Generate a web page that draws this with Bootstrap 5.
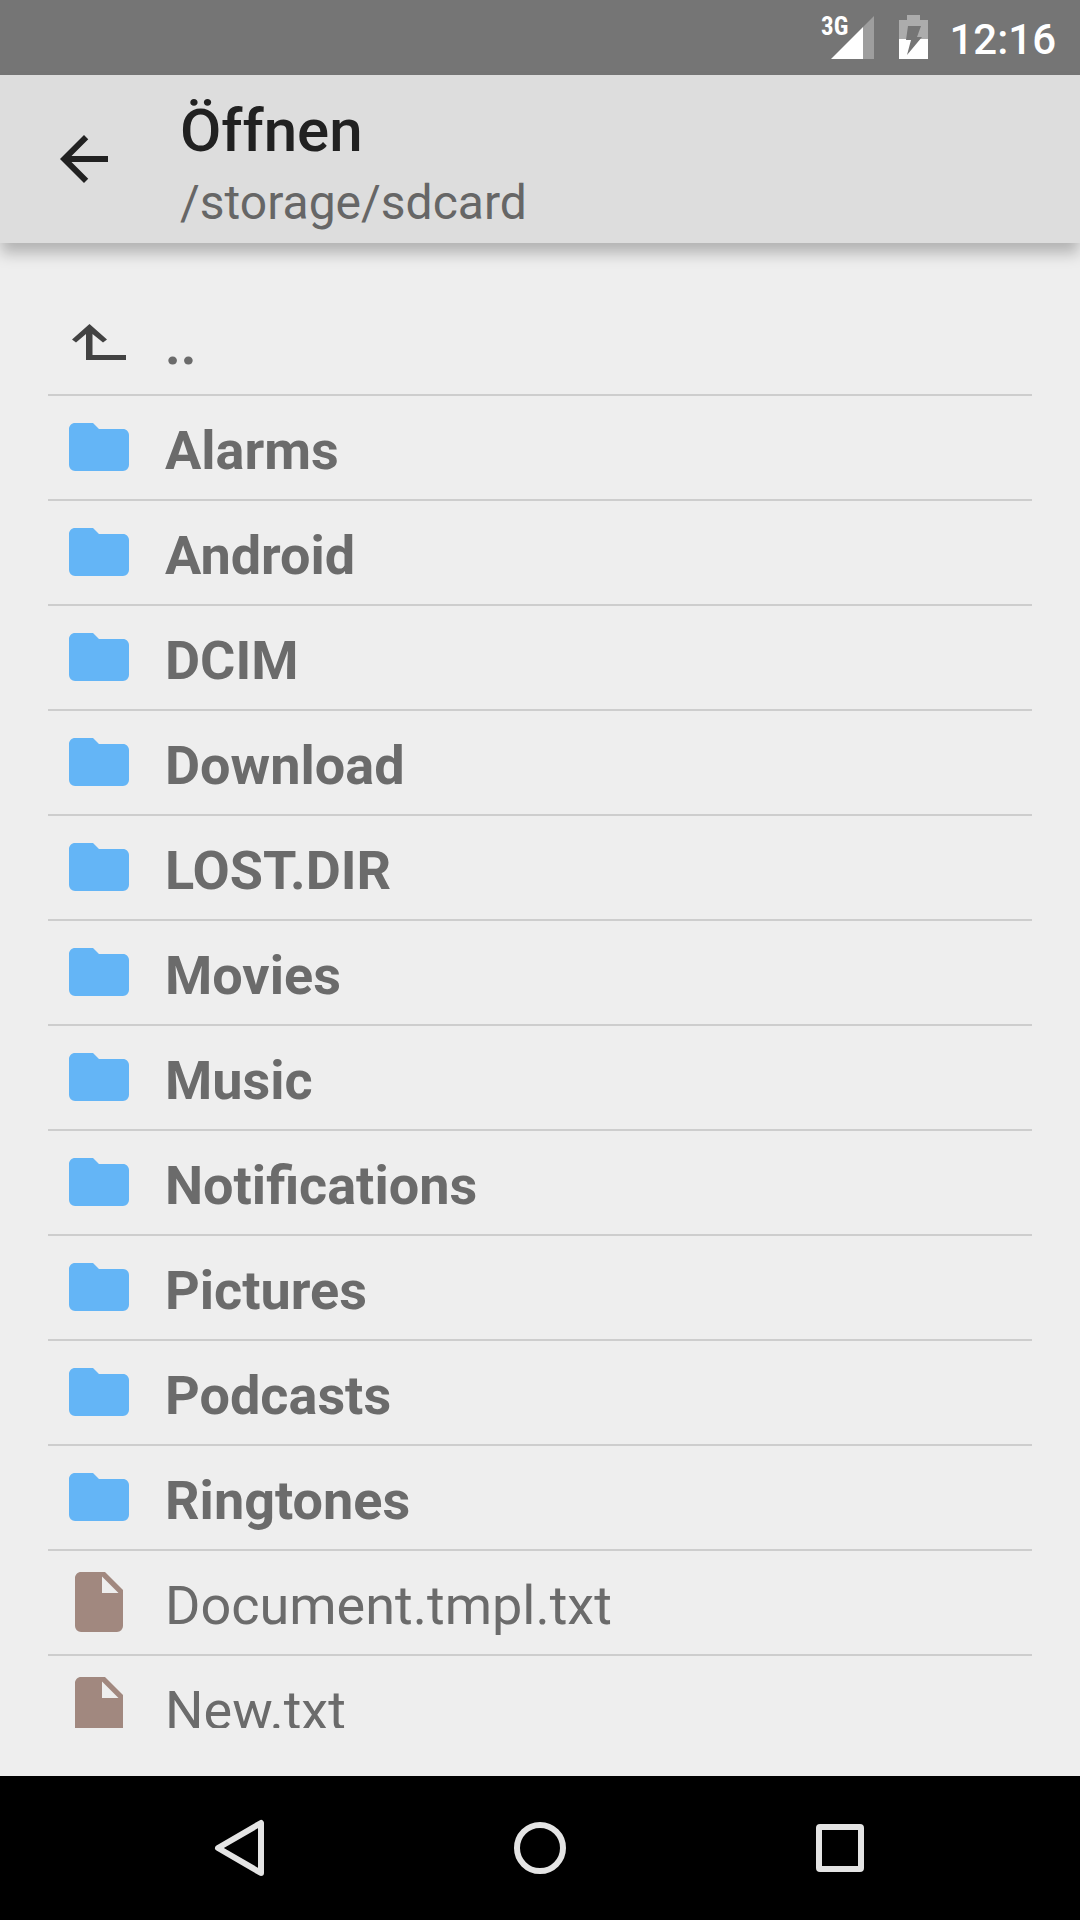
<!DOCTYPE html>
<html lang="de">
<head>
<meta charset="utf-8">
<meta name="viewport" content="width=device-width, initial-scale=1">
<title>Öffnen</title>
<link href="https://cdn.jsdelivr.net/npm/bootstrap@5.3.0/dist/css/bootstrap.min.css" rel="stylesheet">
<style>
  body { background: #eee; font-family: Roboto, "Noto Sans", sans-serif; }
  .status-bar { height: 75px; padding-right: 24px; background: #757575; color: #fff; }
  .status-time { font-size: 42px; line-height: 48px; font-weight: 500; padding: 4px 0 0 21px; }
  .app-bar { height: 168px; padding: 0 48px; background: #ddd; z-index: 1; box-shadow: 0 11px 14px -1px rgba(0, 0, 0, .25); }
  .back-btn { width: 72px; height: 72px; color: #212121; line-height: 0; }
  .app-titles { padding: 10px 0 0 60px; }
  .app-title { font-size: 60px; line-height: 72px; font-weight: 500; color: #212121; }
  .app-path { font-size: 48px; line-height: 60px; color: #666; padding-top: 6px; }
  .browser { padding: 48px; min-height: 0; }
  .file-list { scrollbar-width: none; --bs-list-group-bg: transparent; --bs-list-group-border-color: #cdcdcd; --bs-list-group-action-hover-bg: #e4e4e4; }
  .file-list::-webkit-scrollbar { display: none; }
  .file-list .file-row.list-group-item { height: 105px; padding: 0 15px 2px; gap: 30px; border-width: 0 0 2px; color: #6b6b6b; font-size: 54px; line-height: 64px; }
  .file-row svg { width: 72px; height: 72px; }
  .file-name { padding-top: 8px; }
  .nav-keys { height: 144px; padding: 0 90px; background: #000; }
  .nav-keys .btn { border: 0; line-height: 0; }
</style>
</head>
<body class="vh-100 d-flex flex-column overflow-hidden">
<svg class="d-none" aria-hidden="true">
  <symbol id="folder" viewBox="0 0 24 24"><path fill="#64b5f6" d="M10 4H4c-1.11 0-2 .89-2 2v12a2 2 0 0 0 2 2h16a2 2 0 0 0 2-2V8c0-1.11-.9-2-2-2h-8l-2-2z"/></symbol>
  <symbol id="file" viewBox="0 0 24 24"><path fill="#a1887f" d="M13 9V3.5L18.5 9H13zM6 2c-1.11 0-2 .89-2 2v16a2 2 0 0 0 2 2h12a2 2 0 0 0 2-2V8l-6-6H6z"/></symbol>
</svg>

<div class="status-bar d-flex align-items-center justify-content-end flex-shrink-0">
  <svg width="108" height="75" viewBox="820 0 108 75" role="img" aria-label="3G, Akku lädt">
    <path fill="#9e9e9e" d="M874 16v43h-11V27z"/>
    <path fill="#fff" d="M863 27v32h-32z"/>
    <text x="821" y="35" fill="#fff" font-family="'Roboto Condensed', 'Liberation Sans Narrow', Roboto, sans-serif" font-size="25" font-weight="700">3G</text>
    <path fill="#acacac" d="M899 39V20h8v-5h13v5h8v19z"/>
    <path fill="#fff" d="M899 39h29v20h-29z"/>
    <path fill="#757575" d="M908 26h13l-4 11h5l-15 18 4-15h-5z"/>
  </svg>
  <div class="status-time">12:16</div>
</div>

<header class="app-bar d-flex align-items-center flex-shrink-0 position-relative">
  <button type="button" class="back-btn btn border-0 p-0 flex-shrink-0" aria-label="Zurück">
    <svg width="72" height="72" viewBox="0 0 24 24" fill="currentColor"><path d="M20 11H7.83l5.59-5.59L12 4l-8 8 8 8 1.41-1.41L7.83 13H20v-2z"/></svg>
  </button>
  <div class="app-titles">
    <h1 class="app-title m-0">Öffnen</h1>
    <div class="app-path">/storage/sdcard</div>
  </div>
</header>

<main class="browser flex-fill d-flex flex-column">
  <div class="file-list list-group list-group-flush flex-fill overflow-auto flex-nowrap">
    <a href="#" class="file-row list-group-item list-group-item-action d-flex align-items-center flex-shrink-0 fw-bold">
      <svg viewBox="0 0 72 72" aria-hidden="true"><path fill="#424242" d="M26.500 18L44 33.500 40 36.500 29.500 28V49H63v5H23V28L13 36.500 9 33.500z"/></svg>
      <span class="file-name">..</span></a>
    <a href="#" class="file-row list-group-item list-group-item-action d-flex align-items-center flex-shrink-0 fw-bold"><svg aria-hidden="true"><use href="#folder"/></svg><span class="file-name">Alarms</span></a>
    <a href="#" class="file-row list-group-item list-group-item-action d-flex align-items-center flex-shrink-0 fw-bold"><svg aria-hidden="true"><use href="#folder"/></svg><span class="file-name">Android</span></a>
    <a href="#" class="file-row list-group-item list-group-item-action d-flex align-items-center flex-shrink-0 fw-bold"><svg aria-hidden="true"><use href="#folder"/></svg><span class="file-name">DCIM</span></a>
    <a href="#" class="file-row list-group-item list-group-item-action d-flex align-items-center flex-shrink-0 fw-bold"><svg aria-hidden="true"><use href="#folder"/></svg><span class="file-name">Download</span></a>
    <a href="#" class="file-row list-group-item list-group-item-action d-flex align-items-center flex-shrink-0 fw-bold"><svg aria-hidden="true"><use href="#folder"/></svg><span class="file-name">LOST.DIR</span></a>
    <a href="#" class="file-row list-group-item list-group-item-action d-flex align-items-center flex-shrink-0 fw-bold"><svg aria-hidden="true"><use href="#folder"/></svg><span class="file-name">Movies</span></a>
    <a href="#" class="file-row list-group-item list-group-item-action d-flex align-items-center flex-shrink-0 fw-bold"><svg aria-hidden="true"><use href="#folder"/></svg><span class="file-name">Music</span></a>
    <a href="#" class="file-row list-group-item list-group-item-action d-flex align-items-center flex-shrink-0 fw-bold"><svg aria-hidden="true"><use href="#folder"/></svg><span class="file-name">Notifications</span></a>
    <a href="#" class="file-row list-group-item list-group-item-action d-flex align-items-center flex-shrink-0 fw-bold"><svg aria-hidden="true"><use href="#folder"/></svg><span class="file-name">Pictures</span></a>
    <a href="#" class="file-row list-group-item list-group-item-action d-flex align-items-center flex-shrink-0 fw-bold"><svg aria-hidden="true"><use href="#folder"/></svg><span class="file-name">Podcasts</span></a>
    <a href="#" class="file-row list-group-item list-group-item-action d-flex align-items-center flex-shrink-0 fw-bold"><svg aria-hidden="true"><use href="#folder"/></svg><span class="file-name">Ringtones</span></a>
    <a href="#" class="file-row list-group-item list-group-item-action d-flex align-items-center flex-shrink-0"><svg aria-hidden="true"><use href="#file"/></svg><span class="file-name">Document.tmpl.txt</span></a>
    <a href="#" class="file-row list-group-item list-group-item-action d-flex align-items-center flex-shrink-0"><svg aria-hidden="true"><use href="#file"/></svg><span class="file-name">New.txt</span></a>
  </div>
</main>

<nav class="nav-keys d-flex flex-shrink-0" aria-label="Navigation">
  <button type="button" class="btn p-0 flex-fill" aria-label="Zurück"><svg width="72" height="72" viewBox="0 0 72 72" fill="none" stroke="#e4e4e4" stroke-width="6" stroke-linejoin="round"><path d="M14 36L57 11V61z"/></svg></button>
  <button type="button" class="btn p-0 flex-fill" aria-label="Startbildschirm"><svg width="72" height="72" viewBox="0 0 72 72" fill="none" stroke="#e4e4e4" stroke-width="6"><circle cx="36" cy="36" r="23"/></svg></button>
  <button type="button" class="btn p-0 flex-fill" aria-label="Letzte Apps"><svg width="72" height="72" viewBox="0 0 72 72" fill="none" stroke="#e4e4e4" stroke-width="6"><rect x="15" y="15" width="42" height="42" rx="1" stroke-linejoin="round"/></svg></button>
</nav>
<script src="https://cdn.jsdelivr.net/npm/bootstrap@5.3.0/dist/js/bootstrap.bundle.min.js"></script>
</body>
</html>
